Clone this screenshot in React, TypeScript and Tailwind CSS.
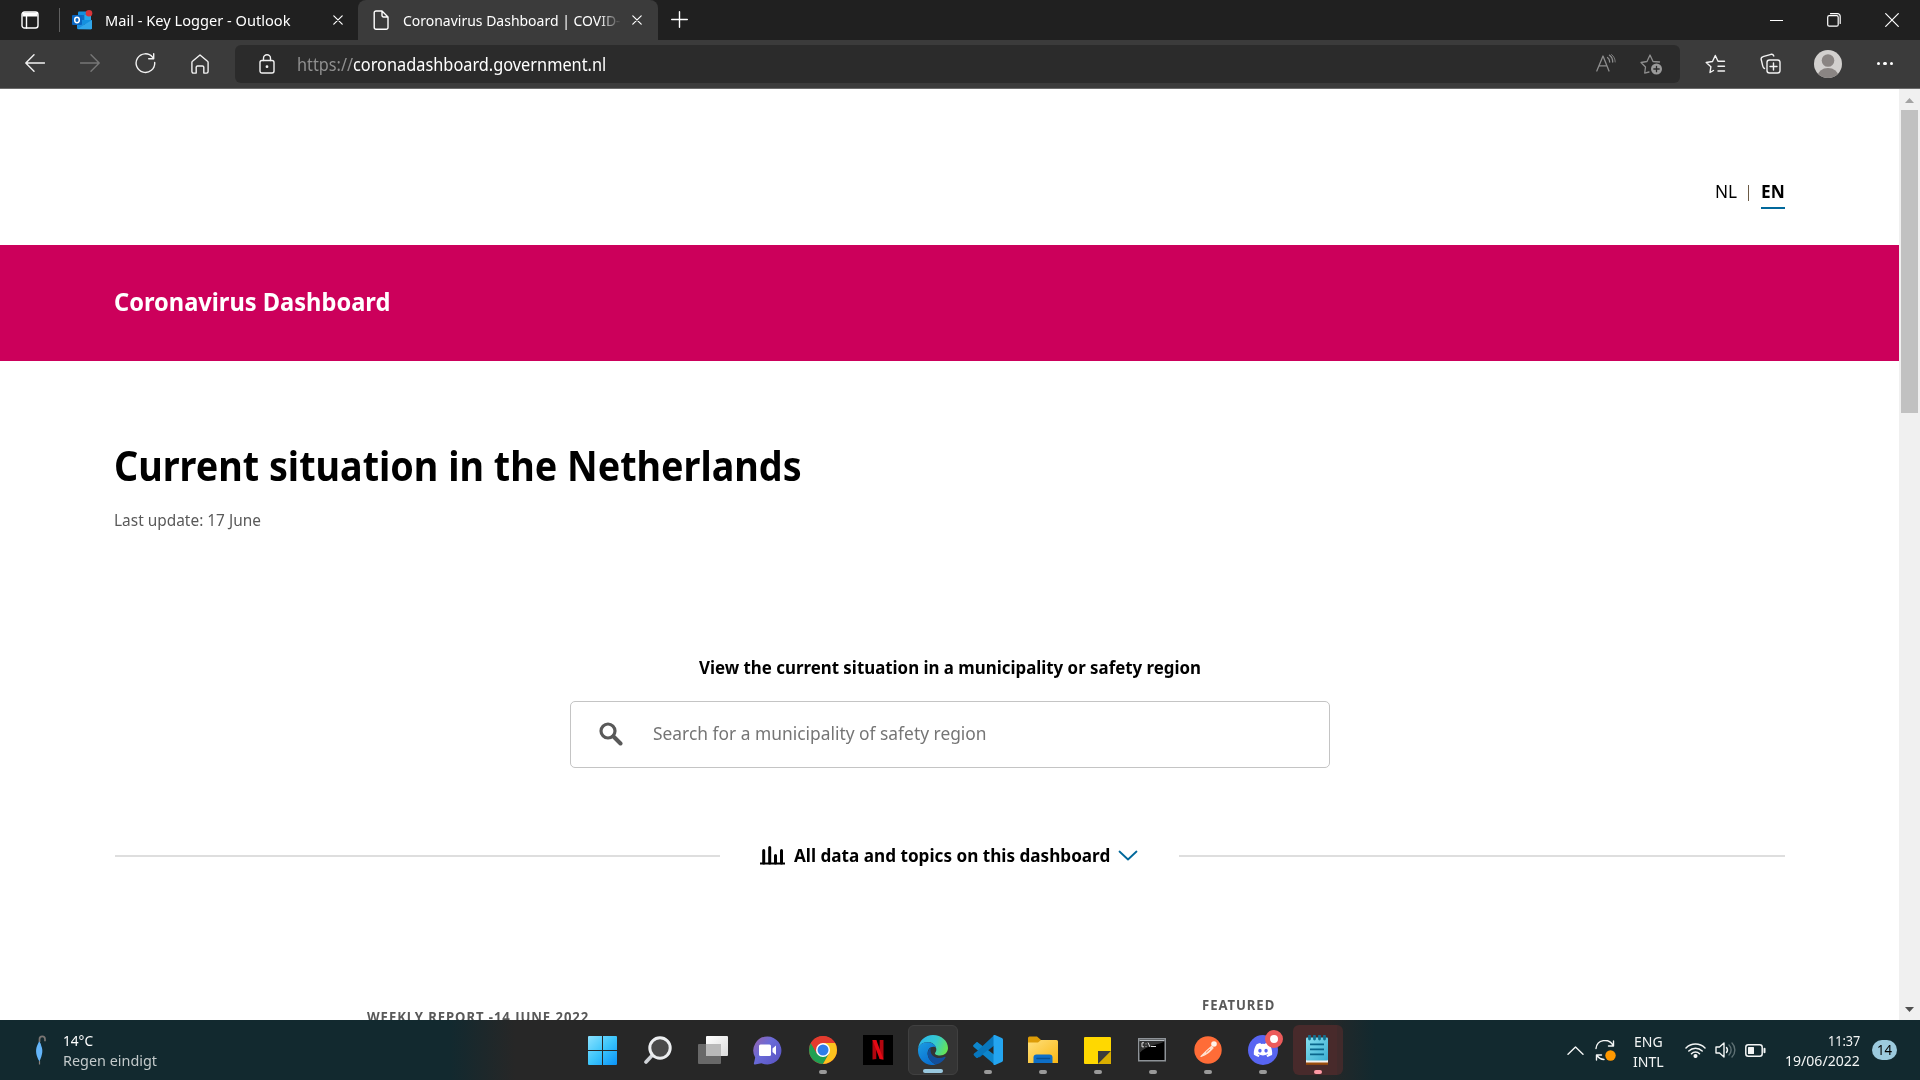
import { useLayoutEffect, useRef, type ReactNode } from "react";
import { FaDiscord } from "react-icons/fa";

/** Single line of text, condensed or widened to fill the width its class gives. */
function Fit({ className = "", children }: { className?: string; children: ReactNode }) {
  const outer = useRef<HTMLSpanElement>(null);
  const inner = useRef<HTMLSpanElement>(null);
  useLayoutEffect(() => {
    if (!outer.current || !inner.current) return;
    const scale = outer.current.clientWidth / inner.current.offsetWidth;
    inner.current.style.transform = `scaleX(${scale})`;
  }, []);
  return (
    <span ref={outer} className={`block shrink-0 whitespace-nowrap ${className}`}>
      <span ref={inner} className="inline-block origin-left align-top">
        {children}
      </span>
    </span>
  );
}

type IconProps = { w: number; h: number; className?: string; children: ReactNode; sw?: number };

function Icon({ w, h, className = "", children, sw = 1.4 }: IconProps) {
  return (
    <svg
      width={w}
      height={h}
      viewBox={`0 0 ${w} ${h}`}
      fill="none"
      stroke="currentColor"
      strokeWidth={sw}
      strokeLinecap="round"
      strokeLinejoin="round"
      className={`shrink-0 ${className}`}
    >
      {children}
    </svg>
  );
}

function CloseIcon({ className = "" }: { className?: string }) {
  return (
    <Icon w={10} h={10} sw={1.2} className={className}>
      <path d="M.8.8l8.400 8.400M9.200.8L.8 9.200" />
    </Icon>
  );
}

function OutlookIcon() {
  return (
    <svg width="21" height="20" viewBox="0 0 21 20" className="mb-px ml-[12px] shrink-0">
      <rect x="6" y="1.500" width="13" height="13" rx="1" fill="#1490df" />
      <rect x="6" y="5" width="6.500" height="5" fill="#0f6cbd" />
      <rect x="12.500" y="5" width="6.500" height="5" fill="#28a8ea" />
      <path d="M5 10l7.500 4.500L20 10v8a1.200 1.200 0 01-1.200 1.200H6.200A1.200 1.200 0 015 18z" fill="#1a8fe0" />
      <path d="M5.500 19L20 10v8a1.200 1.200 0 01-1.200 1.200z" fill="#31a6ea" />
      <rect x="0" y="5" width="10" height="10" rx="1" fill="#0a66c2" />
      <ellipse cx="5" cy="10" rx="2.300" ry="2.700" fill="none" stroke="#fff" strokeWidth="1.500" />
      <circle cx="17" cy="3.300" r="3.300" fill="#d8363a" />
    </svg>
  );
}

function TitleBar() {
  return (
    <div className="flex h-10 items-stretch bg-[#202020] text-white">
      <div className="flex w-[358px] items-center">
        <Icon w={18} h={18} className="ml-[21px]">
          <rect x="1" y="1" width="16" height="16" rx="2.500" />
          <path d="M1.500 3.500h15" strokeWidth="4" strokeLinecap="butt" />
          <path d="M5.500 4v13" />
        </Icon>
        <div className="ml-5 h-6 w-px bg-[#606060]" />
        <OutlookIcon />
        <Fit className="mb-px ml-[12px] w-[186px] text-[15px] leading-[22px]">Mail - Key Logger - Outlook</Fit>
        <CloseIcon className="ml-[42px]" />
      </div>
      <div className="flex w-[300px] items-center rounded-t-lg bg-[#3b3b3b]">
        <Icon w={16} h={20} className="ml-[15px]">
          <path d="M3 1h6l6 6v10.500a1.800 1.800 0 01-1.800 1.800H3a1.800 1.800 0 01-1.800-1.800V2.800A1.800 1.800 0 013 1zM9 1v4.500A1.500 1.500 0 0010.500 7H15" />
        </Icon>
        <div className="mb-px ml-[14px] w-[218px] overflow-hidden [mask-image:linear-gradient(to_right,black_90%,transparent)]">
          <Fit className="w-[218px] text-[15px] leading-[22px]">Coronavirus Dashboard | COVID-</Fit>
        </div>
        <CloseIcon className="ml-[11px]" />
      </div>
      <div className="flex flex-1 items-center">
        <Icon w={17} h={17} className="mb-px ml-[13px]">
          <path d="M8.500.7v15.600M.7 8.500h15.600" />
        </Icon>
        <div className="ml-auto flex items-center pr-[21.500px]">
          <Icon w={13} h={13} sw={1}>
            <path d="M0 6.500h13" />
          </Icon>
          <Icon w={14} h={14} sw={1.200} className="ml-[44px]">
            <rect x=".7" y="2.700" width="10.500" height="10.500" rx="1.500" />
            <path d="M3.500.700h7a2.700 2.700 0 012.700 2.700v7" />
          </Icon>
          <Icon w={14} h={14} sw={1.200} className="ml-[44px]">
            <path d="M.7.7l12.600 12.600M13.300.7L.7 13.300" />
          </Icon>
        </div>
      </div>
    </div>
  );
}

function Toolbar() {
  return (
    <div className="flex h-[49px] items-center border-b border-[#6b6b6b] bg-[#3b3b3b] pb-px text-[#f2f2f2]">
      <Icon w={20} h={18} className="mb-px ml-[25px]">
        <path d="M19.500 9H1M9 .8L.8 9 9 17.200" />
      </Icon>
      <Icon w={20} h={18} className="mb-px ml-[35px] text-[#777]">
        <path d="M.5 9H19M11 .8L19.200 9 11 17.200" />
      </Icon>
      <Icon w={21} h={21} className="ml-[35px]">
        <path d="M17.600 4.200A9.300 9.300 0 1019.700 9.500M18.700.7v5h-5" />
      </Icon>
      <Icon w={18} h={20} className="ml-[35px]">
        <path d="M9 1l7.500 6.300c.4.300.6.800.6 1.300v9a1.500 1.500 0 01-1.500 1.500h-2.800v-6A1.300 1.300 0 0011.500 12h-5a1.300 1.300 0 00-1.300 1.100v6H2.400A1.500 1.500 0 01.9 17.600v-9c0-.5.200-1 .6-1.300z" />
      </Icon>
      <div className="ml-[26px] flex h-[38px] w-[1445px] items-center rounded-md bg-[#2b2b2b]">
        <Icon w={16} h={20} className="ml-[24px]">
          <rect x="1" y="6.500" width="14" height="12.500" rx="2" />
          <path d="M4.500 6.500V4.300a3.500 3.500 0 017 0v2.200" />
          <circle cx="8" cy="12.700" r=".7" fill="currentColor" />
        </Icon>
        <Fit className="ml-[22px] w-[56px] text-[18px] leading-6 text-[#8f8f8f]">https://</Fit>
        <Fit className="w-[253px] text-[18px] leading-6 text-white">coronadashboard.government.nl</Fit>
        <Icon w={20} h={18} sw={1.300} className="mb-[2px] ml-auto text-[#8e8e8e]">
          <path d="M.8 17L7 2l6 15M3 11.800h8M11.500 3.500c1.500 1 2.200 2.500 2.200 4.500M13.500 1.200c2.200 1.500 3.200 3.800 3.200 6.800" />
          <path d="M15.500.5c2.500 2 3.700 4.500 3.700 7.500" strokeWidth=".8" />
        </Icon>
        <Icon w={23} h={22} sw={1.300} className="mr-[17px] ml-[24px] text-[#8e8e8e]">
          <path d="M9 19l-4.300 1.200.8-6.200L1 9.500l6-1 3-6.500 3 6.500 6.500.5" />
          <circle cx="16.500" cy="16" r="5.500" fill="#9a9a9a" stroke="none" />
          <path d="M16.500 13.300v5.400M13.800 16h5.400" stroke="#2b2b2b" />
        </Icon>
      </div>
      <Icon w={21} h={20} className="ml-[25px]">
        <path d="M5 18.500l.9-5.800-4.700-4.200 6.300-1L10.300 1.500l2.700 5.800h6.500M5 18.500l3.500-2M13 12.200h6.500M13 17h6.500" />
      </Icon>
      <Icon w={21} h={21} className="ml-[34px]">
        <rect x="7" y="7" width="13" height="13" rx="2.500" />
        <path d="M13.500 10v7M10 13.500h7M4.500 15.500C3.500 15 3 14 2.700 12.800L1.200 6.500c-.3-1.300.5-2.500 1.800-2.800L11 1.300c1.300-.3 2.300.3 2.800 1.700" />
      </Icon>
      <svg width="28" height="28" viewBox="0 0 28 28" className="ml-[33px] shrink-0">
        <clipPath id="avatar"><circle cx="14" cy="14" r="14" /></clipPath>
        <g clipPath="url(#avatar)">
          <rect width="28" height="28" fill="#d2d0ce" />
          <circle cx="14" cy="10.500" r="6.300" fill="#8a8583" />
          <ellipse cx="14" cy="26.500" rx="10.500" ry="8.500" fill="#8a8583" />
        </g>
      </svg>
      <div className="ml-[34.500px] flex gap-[3px]">
        <div className="size-[3.500px] rounded-full bg-white" />
        <div className="size-[3.500px] rounded-full bg-white" />
        <div className="size-[3.500px] rounded-full bg-white" />
      </div>
    </div>
  );
}

function Page() {
  return (
    <div className="h-[931px] w-[1899px] overflow-hidden bg-white text-black">
      <div className="flex h-[156px] items-start justify-end pt-[90px] pr-[114px] text-[18px] leading-6">
        <Fit className="w-[22px]">NL</Fit>
        <span className="mt-[6px] ml-[11px] h-4 w-px bg-[#6b5a45]" />
        <div className="ml-[12px] h-[30px] w-6 border-b-2 border-[#01689b]">
          <Fit className="w-6 font-bold">EN</Fit>
        </div>
      </div>
      <div className="h-[116px] bg-[#cc005b] pt-[40px] pl-[114px] text-white">
        <Fit className="w-[276px] text-[25px] leading-8 font-bold">Coronavirus Dashboard</Fit>
      </div>
      <div className="pt-[78px] pl-[114px]">
        <h1>
          <Fit className="w-[688px] text-[42px] leading-[52px] font-bold">Current situation in the Netherlands</Fit>
        </h1>
        <Fit className="mt-[17px] w-[147px] text-[17px] leading-6 text-[#595959]">Last update: 17 June</Fit>
      </div>
      <div className="mt-[123px] flex flex-col items-center">
        <Fit className="w-[502px] text-[18px] leading-6 font-bold">
          View the current situation in a municipality or safety region
        </Fit>
        <div className="mt-[22px] ml-px flex h-[67px] w-[760px] items-center rounded-[5px] border border-[#c4c4c4]">
          <Icon w={24} h={24} sw={3.200} className="mb-px ml-[28px] text-[#595959]">
            <circle cx="9" cy="9" r="7" />
            <path d="M14.500 14.500l7 7" strokeWidth="4" />
          </Icon>
          <Fit className="mb-[3px] ml-[30px] w-[334px] text-[18px] leading-6 text-[#757575]">
            Search for a municipality of safety region
          </Fit>
        </div>
      </div>
      <div className="mt-[75px] flex h-6 items-center pr-[114px] pl-[115px] font-bold">
        <div className="mt-px h-[2px] w-[605px] bg-[#dedede]" />
        <svg width="25" height="19" viewBox="0 0 25 19" className="mt-px ml-10 shrink-0">
          <path d="M0 16.500h25V18.500H0z" fill="#000" />
          <path d="M3.700 4.500V17M9.700 1.500V17M15.500 9.500V17M21.500 4.500V17" stroke="#000" strokeWidth="3" strokeLinecap="round" />
        </svg>
        <Fit className="ml-[9px] w-[316px] text-[18px] leading-6">All data and topics on this dashboard</Fit>
        <Icon w={20} h={12} sw={1.800} className="mt-px ml-[8px] text-[#01689b]">
          <path d="M1.500 1.500l8.500 8 8.500-8" />
        </Icon>
        <div className="mt-px ml-[41px] h-[2px] flex-1 bg-[#dedede]" />
      </div>
      <div className="mt-[128px] flex items-start pl-[367px] text-[14px] leading-5 font-bold text-[#595959]">
        <Fit className="mt-3 w-[222px] tracking-[1px]">WEEKLY REPORT -14 JUNE 2022</Fit>
        <Fit className="ml-[613px] w-[73px] tracking-[1px]">FEATURED</Fit>
      </div>
    </div>
  );
}

function Scrollbar() {
  return (
    <div className="flex h-[931px] w-[21px] flex-col items-center bg-[#f0f0f0]">
      <svg width="9" height="5" viewBox="0 0 9 5" className="mt-[9px] shrink-0">
        <path d="M0 5L4.500 0 9 5z" fill="#a3a3a3" />
      </svg>
      <div className="mt-[7px] h-[303px] w-[17px] bg-[#c1c1c1]" />
      <svg width="9" height="5" viewBox="0 0 9 5" className="mt-auto mb-[8px] shrink-0">
        <path d="M0 0L4.500 5 9 0z" fill="#505050" />
      </svg>
    </div>
  );
}

type AppCellProps = { children: ReactNode; mark?: string; cell?: string };

function AppCell({ children, mark, cell = "" }: AppCellProps) {
  return (
    <div className="flex h-[60px] w-[55px] items-center justify-center">
      <div className={`relative flex h-[50px] w-[50px] items-center justify-center rounded-md ${cell}`}>
        {children}
        {mark && <span className={`absolute bottom-px h-1 rounded-full ${mark}`} />}
      </div>
    </div>
  );
}

const running = "w-2 bg-[#9a9a9a]";

function TaskIcons() {
  return (
    <div className="flex">
      <AppCell>
        <svg width="29" height="29" viewBox="0 0 29 29">
          <defs>
            <linearGradient id="win" x1="0" y1="0" x2="29" y2="29" gradientUnits="userSpaceOnUse">
              <stop stopColor="#8be2ff" /><stop offset=".5" stopColor="#3cc5fb" /><stop offset="1" stopColor="#0a93f8" />
            </linearGradient>
          </defs>
          <path d="M1 0h13v14H0V1a1 1 0 011-1zM15 0h13a1 1 0 011 1v13H15zM0 15h14v14H1a1 1 0 01-1-1zM15 15h14v13a1 1 0 01-1 1H15z" fill="url(#win)" />
        </svg>
      </AppCell>
      <AppCell>
        <svg width="28" height="28" viewBox="0 0 28 28">
          <path d="M9 18.500L2 26" stroke="#d0d3d8" strokeWidth="3.600" strokeLinecap="round" />
          <circle cx="16" cy="12" r="10.200" fill="#4a4a4a" stroke="#eceef0" strokeWidth="3" />
        </svg>
      </AppCell>
      <AppCell>
        <svg width="30" height="28" viewBox="0 0 30 28">
          <defs><linearGradient id="tv" x1="0" y1="0" x2="1" y2="1"><stop stopColor="#fff" /><stop offset="1" stopColor="#dcdcdc" /></linearGradient></defs>
          <rect x="0" y="8" width="23" height="20" rx="1" fill="#686868" />
          <rect x="8" y="0" width="22" height="20" rx="1" fill="url(#tv)" />
          <path d="M8 8h15v12H8z" fill="#b9b9b9" />
        </svg>
      </AppCell>
      <AppCell>
        <svg width="29" height="29" viewBox="0 0 29 29">
          <defs><linearGradient id="chat" x1="0" y1="0" x2="1" y2=".8"><stop stopColor="#9a62a8" /><stop offset=".45" stopColor="#6a6bd8" /><stop offset="1" stopColor="#5a55c4" /></linearGradient></defs>
          <path d="M14.500.500a14 14 0 11-6 26.700L2 28.500c-.8 0-1.400-.7-1-1.500l1.200-5.500A14 14 0 0114.500.500z" fill="url(#chat)" />
          <rect x="6" y="8.500" width="12" height="11.500" rx="1.500" fill="#fff" />
          <path d="M19.500 12.500L23 9.500v9.500l-3.500-3z" fill="#fff" />
        </svg>
      </AppCell>
      <AppCell mark={running}>
        <svg width="28" height="28" viewBox="-14 -14 28 28">
          <circle r="14" fill="#e33b2e" />
          <path d="M-12.120-7A14 14 0 000 14L6.060 3.500 0 0-6.060 3.500z" fill="#1fa052" />
          <path d="M0 14A14 14 0 0012.120-7H0L6.060 3.500z" fill="#fcc31e" />
          <path d="M-12.120-7A14 14 0 0112.120-7H0L-6.060 3.500z" fill="#e33b2e" />
          <circle r="7" fill="#fff" />
          <circle r="5.500" fill="#2f7de9" />
        </svg>
      </AppCell>
      <AppCell>
        <svg width="30" height="30" viewBox="0 0 30 30">
          <rect width="30" height="30" fill="#000" />
          <path d="M9.500 5h3.800v19l-3.800.500zM16.700 5h3.800v19.500l-3.800-.5z" fill="#b1060f" />
          <path d="M9.500 5h3.800l7.200 19.500-3.900-.5z" fill="#e50914" />
        </svg>
      </AppCell>
      <AppCell cell="border border-[#404040] bg-[#343434]" mark="w-5 bg-[#99c8de]">
        <svg width="30" height="30" viewBox="0 0 30 30">
          <defs>
            <linearGradient id="edgeTop" x1="0" y1=".3" x2="1" y2=".6"><stop stopColor="#2ab8ee" /><stop offset=".55" stopColor="#36c9cf" /><stop offset="1" stopColor="#66e552" /></linearGradient>
            <linearGradient id="edgeLeft" x1="0" y1="0" x2=".6" y2="1"><stop stopColor="#1b9de2" /><stop offset="1" stopColor="#0a6fd0" /></linearGradient>
          </defs>
          <path d="M.2 13C1.300 5.500 7.200 0 15 0c8.500 0 15 6 15 13 0 4.500-3.500 7.500-8 7.500-3.500 0-5.500-1.500-5-2.500.8-1.200 1.500-2 1.300-4C18 10.500 14.500 7 9.500 7 5.500 7 2 9 .2 13z" fill="url(#edgeTop)" />
          <path d="M.2 13C2 9 5 7.200 9.500 7.200c4.500 0 8 2.500 8.700 5.500-1.500-1.500-5.500-1.500-7.500 1.500C8 18.500 10 26 18 29.600 7.500 32 0 24 0 15.500c0-.9 0-1.700.2-2.500z" fill="url(#edgeLeft)" />
          <path d="M12.500 12.700C8 16 8.500 25 18 29.600c4.500-1 7.800-3.700 9.500-7 .3-.7-.2-1.200-.9-.8C20 25 12.500 22 12.500 15z" fill="#124f9c" />
        </svg>
      </AppCell>
      <AppCell mark={running}>
        <svg width="30" height="30" viewBox="0 0 30 30">
          <path d="M22 0L3.500 17.500a1.500 1.500 0 000 2L5.500 22c.5.400 1.200.4 1.700 0L23 9z" fill="#0065a9" />
          <path d="M22 30L.7 12a1.500 1.500 0 010-2.200l2.500-2.300c.5-.5 1.200-.5 1.700-.1L23 21z" fill="#0d86cc" />
          <path d="M21 .3L4 16.300 1 18.500a1.500 1.500 0 000 2l2.200 2.200c.5.400 1.200.4 1.700 0L22 9.500z" fill="#0877bd" />
          <path d="M22 0l6.800 3c.7.300 1.200 1 1.200 1.800v20.400c0 .8-.5 1.500-1.200 1.800L22 30c-.7.300-1.500 0-1.500-.8V.8C20.500 0 21.300-.3 22 0z" fill="#24a5f0" />
        </svg>
      </AppCell>
      <AppCell mark={running}>
        <svg width="30" height="28" viewBox="0 0 30 28">
          <defs><linearGradient id="fold" x1="0" y1="0" x2="1" y2="1"><stop stopColor="#ffe07b" /><stop offset="1" stopColor="#f9b714" /></linearGradient></defs>
          <path d="M0 2a1.500 1.500 0 011.500-1.500H9L13 4h8v8H0z" fill="#dd9c07" />
          <path d="M0 6.500h10L13 4h15.500A1.500 1.500 0 0130 5.500V27H0z" fill="url(#fold)" />
          <path d="M5.500 27v-5.500a3 3 0 013-3h13a3 3 0 013 3V27z" fill="#0e6fc7" />
          <path d="M9 22.500h12.500" stroke="#084f91" strokeWidth="1.500" strokeLinecap="round" />
        </svg>
      </AppCell>
      <AppCell mark={running}>
        <svg width="27" height="27" viewBox="0 0 27 27">
          <path d="M1 0h25a1 1 0 011 1v13L14 27H1a1 1 0 01-1-1V1a1 1 0 011-1z" fill="#ffd800" />
          <path d="M14 14h13L14 27z" fill="#3b3b3b" />
          <path d="M27 14v13H14z" fill="#d9ae00" />
        </svg>
      </AppCell>
      <AppCell mark={running}>
        <svg width="28" height="24" viewBox="0 0 28 24" className="mr-px mb-px">
          <rect x=".75" y=".75" width="26.500" height="22" fill="#000" stroke="#8e9398" strokeWidth="1.500" />
          <path d="M1.500 2.500h25" stroke="#b7bcc1" strokeWidth="1.500" />
          <path d="M1.500 3.500h25C20 7 9 7 1.500 15z" fill="#333" />
          <path d="M6 4.800H4v4h2M8 5.500v.8M8 8v.8M10 4.500l2 4.500M13 8.500h5" stroke="#ddd" strokeWidth="1" fill="none" />
        </svg>
      </AppCell>
      <AppCell mark={running}>
        <svg width="28" height="28" viewBox="0 0 28 28">
          <circle cx="14" cy="14" r="13.700" fill="#ff6c37" />
          <path d="M7 20.500l5.500-5.500 5-4.500 1.500 1.500-4.500 4.500-4 2.500z" stroke="#ffe3d3" strokeWidth="1.200" fill="#ffd9c6" strokeLinejoin="round" />
          <circle cx="20" cy="8" r="2.800" fill="#fff3ea" />
          <path d="M12 16.500l4-3.500" stroke="#ff6c37" strokeWidth=".8" />
        </svg>
      </AppCell>
      <AppCell mark={running}>
        <div className="flex size-[30px] items-center justify-center rounded-full bg-[#5865f2]">
          <FaDiscord className="size-[20px] text-white" />
        </div>
        <div className="absolute top-[5px] left-[27px] size-[18px] rounded-full border-[5px] border-[#ec5b5b] bg-white" />
      </AppCell>
      <AppCell cell="bg-[#482a2b] border-r-[6px] border-[#412a2b] pl-[6px]" mark="left-[21px] w-2 bg-[#ff9aa5]">
        <svg width="23" height="30" viewBox="0 0 23 30">
          <defs><linearGradient id="note" x1="0" y1="0" x2="1" y2="1"><stop stopColor="#86dff0" /><stop offset="1" stopColor="#3aaed2" /></linearGradient></defs>
          <rect x="0" y="25" width="22" height="4.800" fill="#9c4d0c" />
          <rect x="0" y="24" width="22" height="3.500" fill="#f2f2f2" />
          <rect x="0" y="2.500" width="22" height="23" rx="1" fill="url(#note)" />
          <path d="M4 9.300h14M4 14.300h14M4 19.300h14" stroke="#0b668c" strokeWidth="1.800" />
          <path d="M3.500 1v3M8.500 1v3M13.500 1v3M18.500 1v3" stroke="#13708f" strokeWidth="2.800" strokeLinecap="round" />
        </svg>
      </AppCell>
    </div>
  );
}

function Tray() {
  return (
    <div className="flex flex-1 items-center text-[#f3f5f5]">
      <Icon w={17} h={9} className="ml-[222px]">
        <path d="M1 8.200l7.500-7.200L16 8.200" />
      </Icon>
      <Icon w={21} h={21} className="ml-[11px]">
        <path d="M1 8.500A9 9 0 0118 5.500M18.500 1v5h-5M1.500 20v-5h5M2 15.500a9 9 0 007 4" />
        <circle cx="15.500" cy="15.500" r="5.200" fill="#ff9800" stroke="none" />
      </Icon>
      <div className="mt-px ml-[17px] flex w-[31px] flex-col items-center text-[15px] leading-5">
        <Fit className="w-[29px]">ENG</Fit>
        <Fit className="w-[31px]">INTL</Fit>
      </div>
      <Icon w={21} h={16} sw={1.500} className="mb-px ml-[21px]">
        <path d="M1 6a13.500 13.500 0 0119 0M3.800 9a9.500 9.500 0 0113.400 0M6.500 11.800a5.600 5.600 0 018 0" />
        <circle cx="10.500" cy="14" r="1.300" fill="currentColor" />
      </Icon>
      <Icon w={21} h={18} className="ml-[9px]">
        <path d="M1 6h3.500L9 2v14l-4.500-4H1zM11.500 6.500a4 4 0 010 5" />
        <path d="M14 4a7 7 0 010 10M17 2a10 10 0 010 14" stroke="#5e7074" />
      </Icon>
      <Icon w={21} h={13} sw={1.500} className="ml-[9px]">
        <rect x=".8" y=".8" width="16.400" height="11.400" rx="2.500" />
        <rect x="3" y="3" width="6" height="7" rx=".5" fill="currentColor" stroke="none" />
        <path d="M19.500 4.700v3.600" strokeWidth="2" />
      </Icon>
      <div className="ml-[19px] flex w-[75px] flex-col items-end text-[15px] leading-5">
        <Fit className="w-[32px]">11:37</Fit>
        <Fit className="w-[75px]">19/06/2022</Fit>
      </div>
      <div className="ml-3 flex h-5 w-[25px] items-center justify-center rounded-full bg-[#9ccade] text-black">
        <Fit className="w-[15px] text-[14px] leading-5">14</Fit>
      </div>
    </div>
  );
}

function Taskbar() {
  return (
    <div className="flex h-[60px] items-center bg-[linear-gradient(90deg,#12292f_0,#12292f_450px,#272727_515px,#272727_1325px,#12292f_1375px)]">
      <div className="flex w-[575px] items-center">
        <svg width="12" height="30" viewBox="0 0 12 30" className="ml-[35px] shrink-0">
          <path d="M4.500 7V4.200a2.700 2.700 0 015.500 0v2" fill="none" stroke="#7b7674" strokeWidth="1.700" />
          <path d="M4 6.500c1 .2 1.800 2 2.300 4.500 1.700 4 1.500 8-1.800 15.500C1 21 .1 15 2.200 10.500z" fill="#64b5fa" />
          <path d="M4.500 26v3.500" stroke="#89817c" strokeWidth="1.200" />
        </svg>
        <div className="ml-4 flex flex-col text-[15px] leading-5">
          <Fit className="w-[30px] text-white">14°C</Fit>
          <Fit className="w-[94px] text-[#c3cacb]">Regen eindigt</Fit>
        </div>
      </div>
      <TaskIcons />
      <Tray />
    </div>
  );
}

export default function App() {
  return (
    <div className="h-[1080px] w-[1920px] overflow-hidden font-['Noto_Sans','Open_Sans',sans-serif]">
      <TitleBar />
      <Toolbar />
      <div className="flex">
        <Page />
        <Scrollbar />
      </div>
      <Taskbar />
    </div>
  );
}
